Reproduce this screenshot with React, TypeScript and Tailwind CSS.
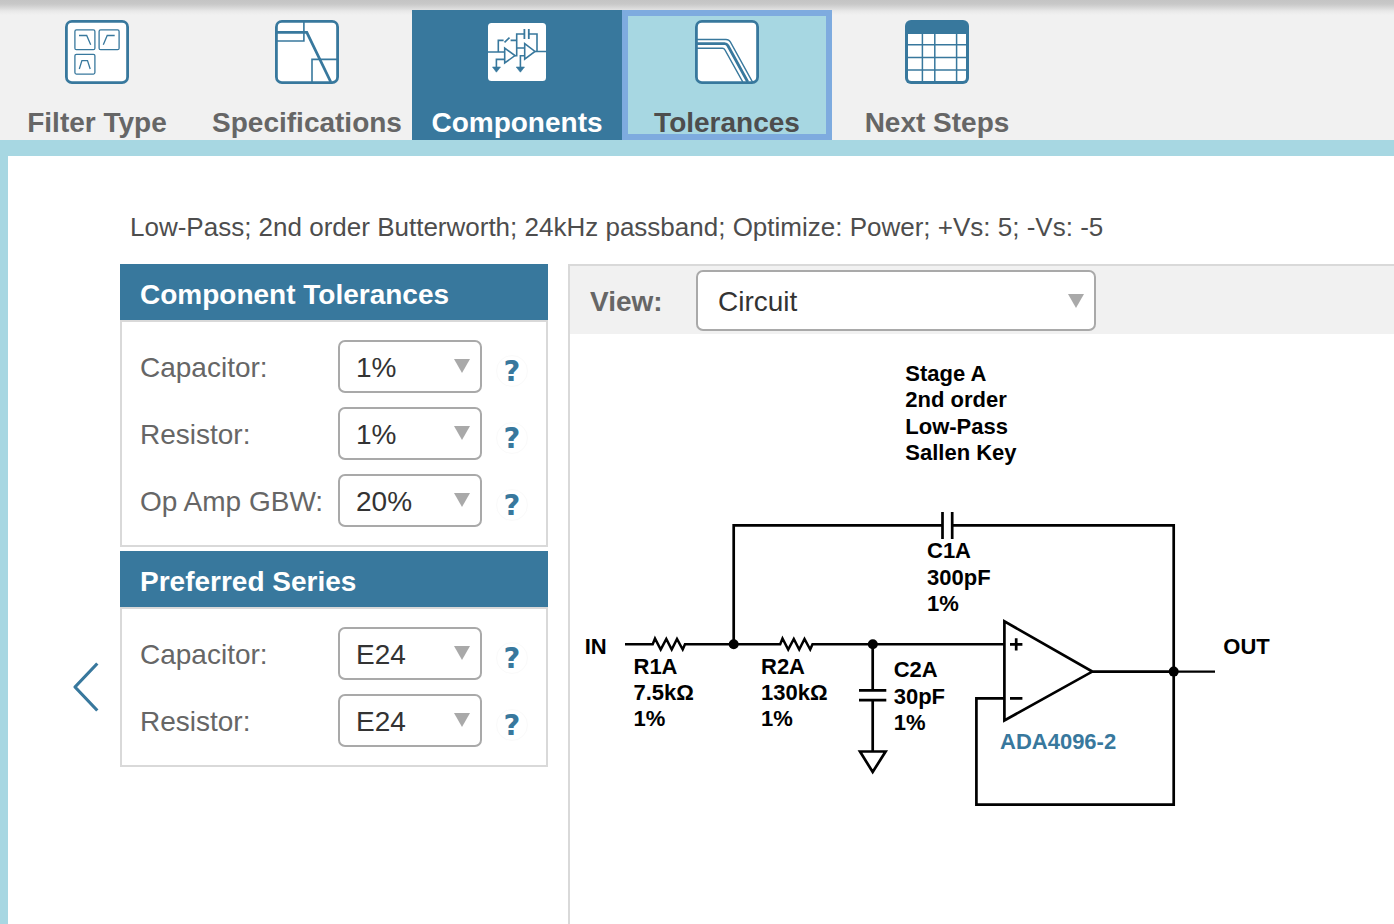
import type { ReactNode } from "react";

const BLUE = "#38789d";

function IconFrame({ children }: { children: ReactNode }) {
  return (
    <svg className="shrink-0" width="64" height="64" viewBox="0 0 64 64" fill="none" stroke={BLUE}>
      <rect x="1.4" y="1.4" width="61.2" height="61.2" rx="5.5" fill="#fff" strokeWidth="2.8" />
      {children}
    </svg>
  );
}

function FilterTypeIcon() {
  return (
    <IconFrame>
      <g strokeWidth="1.3">
        <rect x="9.9" y="9.9" width="20" height="19.8" rx="1.5" />
        <rect x="34.1" y="9.9" width="20" height="19.8" rx="1.5" />
        <rect x="9.9" y="34.3" width="20" height="19.8" rx="1.5" />
        <path d="M14 15.5H21.7L25.7 24.7M38.3 24.7L42.2 15.5H49.7M14.3 49L16.9 40.6H22.5L25.2 49" />
      </g>
    </IconFrame>
  );
}

function SpecificationsIcon() {
  return (
    <IconFrame>
      <path d="M2 21H28.9V2M37 62V39.4H62" strokeWidth="1.6" />
      <path d="M2 12.4H31.8L55.8 62" strokeWidth="2.8" />
    </IconFrame>
  );
}

function ComponentsIcon() {
  return (
    <svg className="shrink-0" width="64" height="64" viewBox="0 0 64 64" fill="none" stroke={BLUE} strokeWidth="1.6">
      <rect x="3" y="3" width="58" height="58" rx="3.5" fill="#fff" stroke="none" />
      <path d="M3 32H19.7M13.3 32V20.4H18.6M19.5 22.4L24.5 17.6M25.6 20.4H31.7M29.5 35.7H31.7V14H39.3M43.9 14H52V31.3M31.7 28H39.7M50 31.5H61" />
      <path d="M39.4 9V19M43.8 9V19" strokeWidth="1.8" />
      <path d="M19.7 28V43L30 35.6ZM39.7 23.7V39.2L50 31.4Z" />
      <path d="M19.7 39.4H11.4V48M39.7 35.7H35.4V48" />
      <path d="M7.5 47H15.5L11.4 52.2ZM31.2 47H39.5L35.4 52.2Z" fill={BLUE} strokeWidth="0.6" />
    </svg>
  );
}

function TolerancesIcon() {
  return (
    <IconFrame>
      <path d="M2 19.4H31Q34 19.4 35.4 22L57.5 62M2 28.2H27.5Q29 28.2 30 30L47.8 62" strokeWidth="1.5" />
      <path d="M2 23.6H29.5Q31.7 23.6 32.8 25.5L52.8 62" strokeWidth="2.8" />
    </IconFrame>
  );
}

function NextStepsIcon() {
  return (
    <svg className="shrink-0" width="64" height="64" viewBox="0 0 64 64" fill="none" stroke={BLUE}>
      <rect width="64" height="64" rx="6" fill={BLUE} stroke="none" />
      <path d="M3 14H61V57.5Q61 61 57.5 61H6.5Q3 61 3 57.5Z" fill="#fff" stroke="none" />
      <path d="M17.4 14V61M29.8 14V61M51.6 14V61M3 24.8H61M3 37.4H61M3 50H61" strokeWidth="1.5" />
    </svg>
  );
}

function Tab({ label, icon, className }: { label: string; icon: ReactNode; className: string }) {
  return (
    <button className={`flex w-[210px] shrink-0 flex-col items-center text-[28px] leading-8 font-bold whitespace-nowrap ${className}`}>
      {icon}
      <span className="mt-[23px]">{label}</span>
    </button>
  );
}

function Select({ value, className }: { value: string; className: string }) {
  return (
    <button className={`flex items-center justify-between rounded-[7px] border-2 border-[#a9a9a9] bg-white text-[28px] leading-8 text-[#333] ${className}`}>
      <span className="pt-[3px]">{value}</span>
      <svg width="16" height="14" viewBox="0 0 16 14">
        <path d="M0 0H16L8 14Z" fill="#a9a9a9" />
      </svg>
    </button>
  );
}

function Panel({ title, rows }: { title: string; rows: [string, string][] }) {
  return (
    <section>
      <h2 className="h-14 bg-[#38789d] pt-[15px] pl-5 text-[28px] leading-8 font-bold text-white">{title}</h2>
      <div className="flex flex-col gap-[14px] border-2 border-[#d9d9d9] py-[18px] pl-[18px]">
        {rows.map(([label, value]) => (
          <div key={label} className="flex h-[53px] items-center">
            <span className="w-[198px] pt-0.5 text-[28px] leading-8 whitespace-nowrap text-[#666]">{label}</span>
            <Select value={value} className="h-[53px] w-36 pr-[10px] pb-px pl-4" />
            <span className="mt-2 ml-[14px] flex size-8 items-center justify-center rounded-full border border-[#fafafa] font-['DejaVu_Sans'] text-[29px] leading-8 font-bold text-[#38789d]">
              ?
            </span>
          </div>
        ))}
      </div>
    </section>
  );
}

function Label({ x, y, lines, fill = "#000" }: { x: number; y: number; lines: string[]; fill?: string }) {
  return (
    <text x={x} y={y} fill={fill} stroke="none">
      {lines.map((line, i) => (
        <tspan key={line} x={x} y={y + i * 26.4}>
          {line}
        </tspan>
      ))}
    </text>
  );
}

function Circuit() {
  return (
    <svg
      width="824"
      height="590"
      viewBox="570 334 824 590"
      fill="none"
      stroke="#000"
      strokeWidth="2.7"
      className="block shrink-0 text-[22px] font-bold"
    >
      <path d="M733.7 644V525.4H942.5M952 525.4H1173.7V804.7H976.4V698.3H1004.4" />
      <path d="M942.5 512V539M952.2 512V539" />
      <path d="M625 644.2H652.7L655 638.5L660.7 649.5L666.3 639L671.7 649.5L677 639L682.7 649.5L685 644.2H780.2L782.5 638.5L788.2 649.5L793.8 639L799.2 649.5L804.5 639L810.2 649.5L812.5 644.2H1004.4" strokeWidth="2.5" />
      <path d="M872.7 644V690.4M859 690.4H886.3M859 700.2H886.3M872.7 700.2V751.5M860 751.5H885.6L872.7 772Z" />
      <path d="M1004.4 621.4V720.4L1092.3 671.6ZM1092.3 671.6H1173.7" />
      <path d="M1173.7 671.6H1215" strokeWidth="2.2" />
      <path d="M1010 644.4H1022.4M1016.2 638.2V650.6M1010 698.4H1022.4" />
      <g fill="#000" stroke="none">
        <circle cx="733.7" cy="644.2" r="5" />
        <circle cx="872.8" cy="644.2" r="5" />
        <circle cx="1173.7" cy="671.6" r="5" />
      </g>
      <Label x={905.3} y={381} lines={["Stage A", "2nd order", "Low-Pass", "Sallen Key"]} />
      <Label x={927} y={558.3} lines={["C1A", "300pF", "1%"]} />
      <Label x={584.7} y={654} lines={["IN"]} />
      <Label x={633.5} y={673.6} lines={["R1A", "7.5kΩ", "1%"]} />
      <Label x={761} y={673.6} lines={["R2A", "130kΩ", "1%"]} />
      <Label x={893.7} y={677.2} lines={["C2A", "30pF", "1%"]} />
      <Label x={1223.3} y={654} lines={["OUT"]} />
      <Label x={1000} y={749} lines={["ADA4096-2"]} fill={BLUE} />
    </svg>
  );
}

export default function App() {
  return (
    <div className="flex h-[924px] w-[1394px] flex-col overflow-hidden bg-white font-['Liberation_Sans',Arial,sans-serif]">
      <header className="h-[140px] shrink-0 overflow-hidden bg-[#f1f1f1] bg-[linear-gradient(#c4c4c4_0px,#c8c8c8_4px,#d9d9d9_8px,#e8e8e8_11px,#f1f1f1_15px)] pt-[10px]">
        <nav className="-ml-2 flex h-[130px]">
          <Tab label="Filter Type" icon={<FilterTypeIcon />} className="pt-[10px] text-[#666]" />
          <Tab label="Specifications" icon={<SpecificationsIcon />} className="pt-[10px] text-[#666]" />
          <Tab label="Components" icon={<ComponentsIcon />} className="bg-[#38789d] pt-[10px] text-white" />
          <Tab label="Tolerances" icon={<TolerancesIcon />} className="border-6 border-[#7eabdf] bg-[#a7d7e2] pt-1 text-[#4d4d4d]" />
          <Tab label="Next Steps" icon={<NextStepsIcon />} className="pt-[10px] text-[#666]" />
        </nav>
      </header>

      <main className="flex flex-1 flex-col border-t-16 border-l-8 border-[#a7d7e2]">
        <p className="mt-[55px] ml-[122px] h-[53px] text-[26px] leading-8 whitespace-nowrap text-[#4d4d4d]">
          Low-Pass; 2nd order Butterworth; 24kHz passband; Optimize: Power; +Vs: 5; -Vs: -5
        </p>
        <div className="flex flex-1">
          <div className="flex w-28 shrink-0 flex-col items-end pt-[398px] pr-5">
            <svg width="28" height="50" viewBox="0 0 28 50" fill="none" stroke={BLUE} strokeWidth="3.2">
              <path d="M25.3 1.5L3 25L25.3 48.5" strokeLinejoin="round" />
            </svg>
          </div>
          <div className="flex w-[428px] shrink-0 flex-col gap-1">
            <Panel
              title="Component Tolerances"
              rows={[
                ["Capacitor:", "1%"],
                ["Resistor:", "1%"],
                ["Op Amp GBW:", "20%"],
              ]}
            />
            <Panel
              title="Preferred Series"
              rows={[
                ["Capacitor:", "E24"],
                ["Resistor:", "E24"],
              ]}
            />
          </div>
          <section className="ml-5 flex flex-1 flex-col border-t-2 border-l-2 border-[#d9d9d9]">
            <div className="flex h-[68px] shrink-0 items-center bg-[#f1f1f1] pl-5">
              <span className="w-[106px] pt-[3px] text-[28px] leading-8 font-bold text-[#666]">View:</span>
              <Select value="Circuit" className="h-[61px] w-[400px] pt-px pr-[10px] pl-5" />
            </div>
            <Circuit />
          </section>
        </div>
      </main>
    </div>
  );
}
